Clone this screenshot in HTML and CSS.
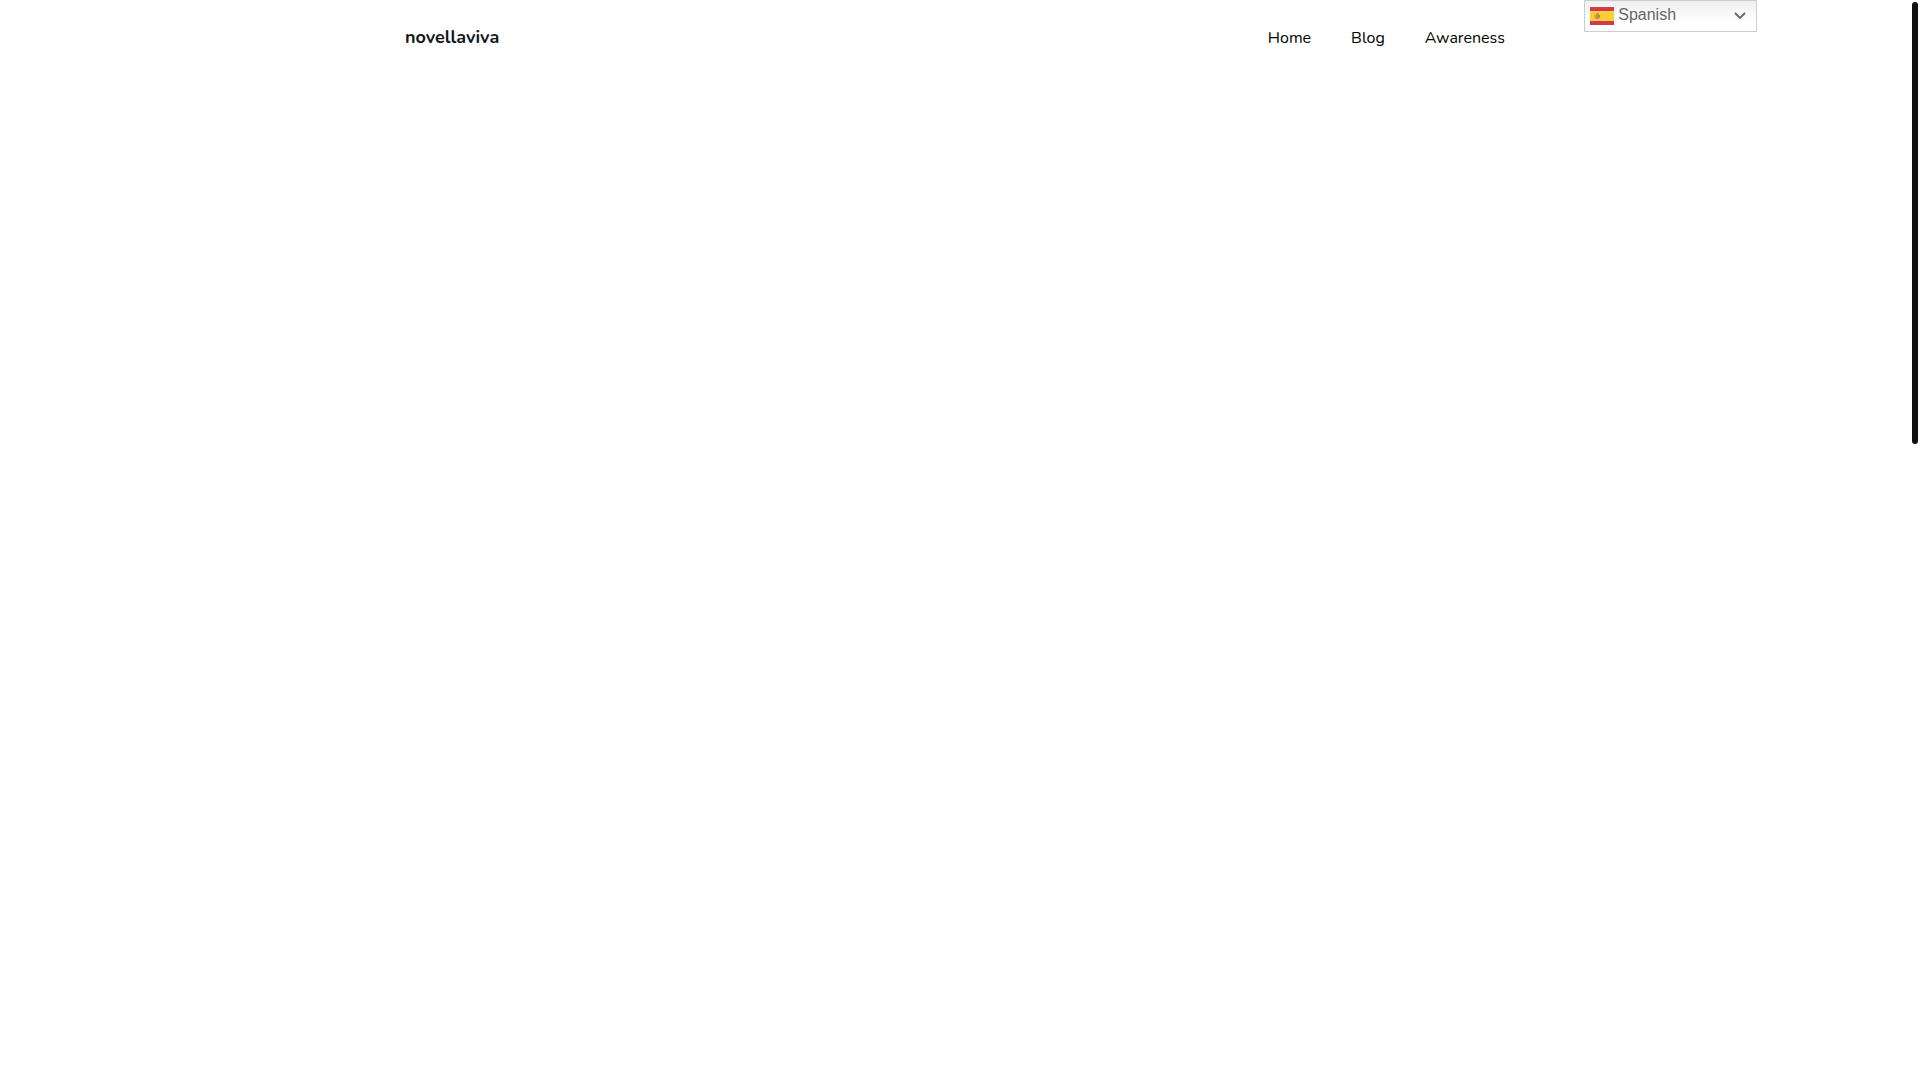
FILE: index.html
```html
<!DOCTYPE html>
<html lang="en">
<head>
  <meta charset="UTF-8" />
  <meta name="viewport" content="width=device-width, initial-scale=1.0"/>
  <title>novellaviva</title>
  <link rel="stylesheet" href="styles.css">
</head>
<body>
  <div class="page">
    <header class="site-header">
      <a class="brand" href="#">novellaviva</a>
      <nav class="menu">
        <a href="#">Home</a>
        <a href="#">Blog</a>
        <a href="#">Awareness</a>
      </nav>
    </header>
    <!-- Language switcher -->
    <div class="switcher">
      <svg class="flag" viewBox="0 0 24 18" aria-hidden="true">
        <rect width="24" height="18" fill="#d03a4b"/>
        <rect y="4" width="24" height="10" fill="#fdcf34"/>
        <rect x="4" y="7" width="1" height="5" fill="#e8b050"/>
        <rect x="11" y="7" width="1" height="5" fill="#edbb48"/>
        <path d="M5 8h5v2l-1 2H6l-1-2z" fill="#d98a4a"/>
        <rect x="6" y="6" width="3" height="2" fill="#d9953f"/>
        <rect x="8" y="8" width="2" height="2" fill="#a87f78"/>
      </svg>
      <select class="lang" aria-label="Language">
        <option>Spanish</option>
      </select>
      <svg class="arrow" viewBox="0 0 12 8" aria-hidden="true">
        <path d="M1 1l5 5 5-5" fill="none" stroke="#666" stroke-width="1.8"/>
      </svg>
    </div>
  </div>
  <!-- Custom scrollbar -->
  <div class="scroll-rail"><div class="scroll-thumb"></div></div>
</body>
</html>
```

FILE: styles.css
```css
* { margin:0; padding:0; box-sizing:border-box; }
body { background:#fff; color:#000; font-family:Nunito, Lato, sans-serif; font-size:16px; }
a { color:inherit; text-decoration:none; }

.page { position:relative; min-height:100vh; margin-right:10px; }
.site-header { display:flex; justify-content:space-between; align-items:center; max-width:1100px; height:76px; margin:0 auto; }
.brand { padding-bottom:2px; color:#101820; font-size:18px; font-weight:700; }
.menu { display:flex; gap:40px; }

/* language switcher */
.switcher { position:absolute; top:0; right:8%; display:grid; width:173px; height:32px; border:1px solid #ccc; background:linear-gradient(#efefef, #fff 70%); }
.switcher > * { grid-area:1 / 1; align-self:center; }
.flag { width:24px; height:18px; margin-left:5px; }
.arrow { width:12px; height:8px; margin-right:10px; justify-self:end; pointer-events:none; }
.lang { appearance:none; width:100%; height:100%; padding:0 30px 2px 33px; border:0; background:none; color:#666; font:16px/20px "Liberation Sans", Arial, sans-serif; }

/* scrollbar */
.scroll-rail { position:fixed; top:2px; right:2px; bottom:0; width:6px; }
.scroll-thumb { height:41%; border-radius:3px; background:#111; }
```
